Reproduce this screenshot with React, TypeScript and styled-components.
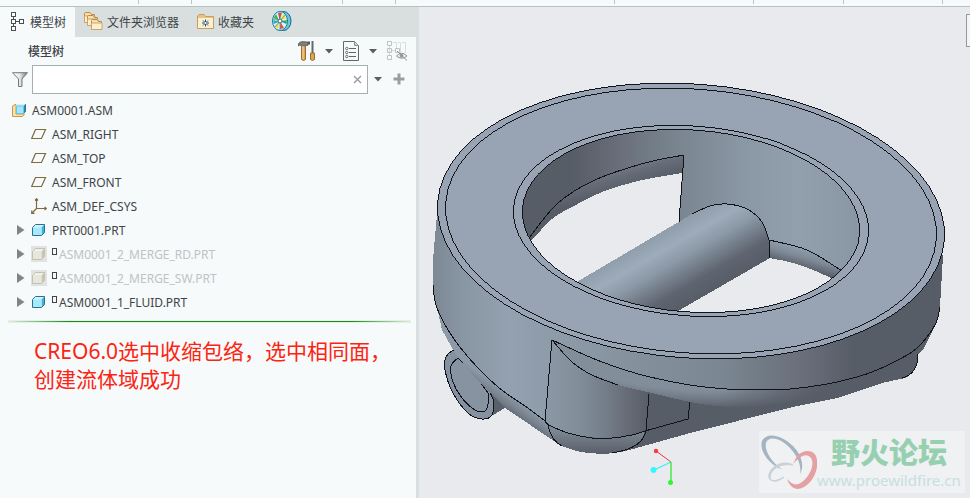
import React from "react";
import styled, { createGlobalStyle } from "styled-components";

const Global = createGlobalStyle`
  * { box-sizing: border-box; }
  body {
    margin: 0;
    background: #e9eaee;
    color: #404448;
    font-family: "Noto Sans", "Noto Sans CJK SC", sans-serif;
    font-size: 12px;
  }
  button { padding: 0; border: 0; background: none; color: inherit; font: inherit; display: flex; align-items: center; }
  svg { display: block; flex: none; }
`;

const Page = styled.div`
  min-height: 100vh;
  display: flex;
  flex-direction: column;
`;
const Ribbon = styled.header`
  height: 7px;
  display: flex;
  background: #f7fafb;
  border-bottom: 1px solid #b3c3c2;
`;
const RibbonGroup = styled.div<{ $w: number }>`
  width: ${(p) => p.$w}px;
  height: 4px;
  border-right: 1px solid #bfc3c6;
`;
const Main = styled.main`
  flex: 1;
  display: flex;
`;
const Side = styled.aside`
  width: 419px;
  flex: none;
  display: flex;
  flex-direction: column;
  background: #f7fafb;
  border-right: 3px solid #d9dfde;
`;
const Tabs = styled.nav`
  height: 30px;
  display: flex;
  background: #d9dfde;
`;
const Tab = styled.button<{ $active?: boolean }>`
  && {
    padding: 0 9px 2px 9px;
    gap: 4px;
    background: ${(p) => (p.$active ? "#f7fafb" : "transparent")};
    font-family: "Noto Sans CJK SC", sans-serif;
    white-space: nowrap;
  }
`;
const TitleRow = styled.div`
  height: 28px;
  display: flex;
  align-items: center;
  padding: 0 8px 0 28px;
`;
const Title = styled.h1`
  margin: 0;
  flex: 1;
  padding-bottom: 2px;
  font: 500 12px "Noto Sans CJK SC", sans-serif;
`;
const Tools = styled.div`
  display: flex;
  gap: 10px;
`;
const SearchRow = styled.div`
  height: 29px;
  display: flex;
  align-items: center;
  padding: 0 11px 0 12px;
  gap: 4px;
`;
const SearchBox = styled.div`
  flex: 1;
  height: 29px;
  display: flex;
  align-items: center;
  padding-right: 5px;
  background: #fff;
  border: 1px solid #a3afb2;
`;
const SearchInput = styled.input`
  flex: 1;
  min-width: 0;
  border: 0;
  outline: 0;
  background: transparent;
  font: inherit;
`;
const SearchTools = styled.div`
  display: flex;
  align-items: center;
  gap: 11px;
  padding: 0 0 1px 2px;
`;
const Tree = styled.ul`
  margin: 4px 0 6px;
  padding: 0;
  list-style: none;
`;
const Row = styled.li<{ $root?: boolean; $muted?: boolean }>`
  height: 24px;
  display: flex;
  align-items: center;
  padding-left: ${(p) => (p.$root ? 12 : 16)}px;
  gap: 5px;
  font-size: 12px;
  color: ${(p) => (p.$muted ? "#c0c3c5" : "#404448")};
`;
const Expander = styled.button`
  width: 10px;
  height: 16px;
`;
const ExpanderGap = styled.span`
  width: 10px;
`;
const IconCell = styled.span<{ $muted?: boolean }>`
  width: 16px;
  height: 16px;
  background: ${(p) => (p.$muted ? "#e1e2e2" : "transparent")};
`;
const Label = styled.span`
  display: flex;
  align-items: flex-start;
  gap: 2px;
`;
const Flag = styled.span`
  width: 5px;
  height: 7px;
  margin-top: 2px;
  border: 1px solid #404448;
`;
const Divider = styled.hr`
  width: 403px;
  height: 3px;
  margin: 0 0 0 8px;
  border: 0;
  background:
    linear-gradient(90deg, #e4ece4, #168a1a 15%, #168a1a 85%, #e4ece4) center / 100% 1px no-repeat,
    #e3f0e3;
`;
const Note = styled.p`
  margin: 14px 0 0 34px;
  color: #fb2412;
  font-family: "Noto Sans", "Noto Sans CJK SC", sans-serif;
  font-size: 21px;
  line-height: 28px;
  white-space: nowrap;
`;
const Viewport = styled.section`
  flex: 1;
  min-width: 0;
  position: relative;
  overflow: hidden;
  background: #e9eaee;
`;
const Scene = styled.svg`
  width: 100%;
  height: auto;
`;
const Handle = styled.div`
  position: absolute;
  top: 7px;
  right: -4px;
  width: 8px;
  height: 33px;
  background: #f4f5f7;
  border: 1px solid #94979c;
`;
const Watermark = styled.div`
  position: absolute;
  right: 5px;
  bottom: 5px;
  width: 206px;
  height: 62px;
  display: flex;
  background: #eff1f3;
`;
const MarkText = styled.div`
  display: flex;
  flex-direction: column;
  align-items: center;
  white-space: nowrap;
`;
const MarkName = styled.strong`
  font: 900 29px/40px "Noto Sans CJK SC", sans-serif;
  color: #96d0b0;
`;
const MarkUrl = styled.a`
  font: 15px/18px "Noto Sans", sans-serif;
  color: #c6dfe0;
  text-decoration: none;
`;

type Pt = [number, number];

// Smooth curve through the points (Catmull-Rom converted to cubic Béziers).
function seg(p: Pt[]): string {
  let d = "";
  for (let i = 0; i < p.length - 1; i++) {
    const a = p[i - 1] || p[i];
    const b = p[i];
    const c = p[i + 1];
    const e = p[i + 2] || c;
    d += `C${b[0] + (c[0] - a[0]) / 6} ${b[1] + (c[1] - a[1]) / 6} ${c[0] - (e[0] - b[0]) / 6} ${c[1] - (e[1] - b[1]) / 6} ${c[0]} ${c[1]}`;
  }
  return d;
}
const curve = (p: Pt[]) => `M${p[0][0]} ${p[0][1]}${seg(p)}`;
const rev = (p: Pt[]) => [...p].reverse();
const to = (p: Pt[]) => `L${p[0][0]} ${p[0][1]}${seg(p)}`;

const wallLeft: Pt[] = [[437, 214], [433, 262], [433, 285], [436, 305], [448, 330], [468, 357], [498, 387], [525, 406], [545, 421]];
const baseArc: Pt[] = [[545, 421], [549, 425], [568, 433], [592, 438], [612, 438], [632, 435], [645, 431], [688, 419]];
const lowerRim: Pt[] = [[552, 340], [592, 358], [625, 370], [650, 377], [690, 385], [727, 389], [760, 390], [790, 389], [827, 384], [857, 377], [877, 370], [898, 360], [917, 348], [935, 325], [940, 307]];
const filletEdge: Pt[] = [[552, 340], [572, 362], [592, 375], [618, 385], [652, 393], [695, 403], [733, 407], [797, 405]];
const nozzleOut: Pt[] = [[453, 350], [446, 357], [445, 370], [453, 393], [468, 413], [482, 419], [492, 415], [494, 401]];
const nozzleIn: Pt[] = [[458, 358], [451, 366], [453, 382], [462, 398], [475, 410], [485, 411], [488, 404], [488, 393]];
const holeRim: Pt[] = [[529, 238], [558, 203], [595, 180], [645, 163], [684, 155]];
const holeEdge: Pt[] = [[532, 240], [552, 219], [572, 207], [602, 192], [638, 181], [682, 173]];
const shaftEnd: Pt[] = [[692, 214], [710, 206], [727, 204], [747, 209], [762, 222], [769, 240]];
const rightRim: Pt[] = [[769, 240], [807, 250], [842, 271]];
const rightEdge: Pt[] = [[770, 258], [800, 265], [836, 280]];
const underFillet = `${curve(filletEdge)}${to(rev(lowerRim.slice(0, 10)))}Z`;

type Stop = [number, string];
const Grad = ({ id, p, stops }: { id: string; p: number[]; stops: Stop[] }) => (
  <linearGradient id={id} gradientUnits="userSpaceOnUse" x1={p[0]} y1={p[1]} x2={p[2]} y2={p[3]}>
    {stops.map(([o, c]) => <stop key={o} offset={o} stopColor={c} />)}
  </linearGradient>
);

const turn = "rotate(4.3 691 221)";

function Model() {
  return (
    <Scene viewBox="419 7 551 491" shapeRendering="crispEdges" role="img" aria-label="ASM0001">
      <defs>
        <Grad id="outer" p={[432, 0, 945, 0]} stops={[[0, "#7c8894"], [0.06, "#8996a3"], [0.15, "#93a1b0"], [0.25, "#8d9aa8"], [0.4, "#84919d"], [0.56, "#7b8792"], [0.65, "#707a85"], [0.72, "#6a6f7b"], [0.82, "#575d67"], [1, "#575d67"]]} />
        <Grad id="inner" p={[522, 0, 860, 0]} stops={[[0, "#575d67"], [0.15, "#575d67"], [0.29, "#6a6e7a"], [0.38, "#717c87"], [0.52, "#7e8a95"], [0.65, "#8a97a4"], [0.82, "#92a0ae"], [1, "#8996a4"]]} />
        <Grad id="shaft" p={[650, 239, 688, 305]} stops={[[0, "#909eac"], [0.22, "#9dabba"], [0.42, "#8c99a7"], [0.62, "#727c88"], [0.78, "#5f6570"], [1, "#575d67"]]} />
        <Grad id="fillet" p={[624, 160, 632, 188]} stops={[[0, "#7a8692"], [0.5, "#666c77"], [1, "#575d67"]]} />
        <Grad id="rightFillet" p={[806, 247, 800, 268]} stops={[[0, "#93a1b0"], [0.5, "#7e8a96"], [1, "#575d67"]]} />
        <Grad id="boss" p={[545, 0, 650, 0]} stops={[[0, "#8b98a5"], [0.3, "#828f9b"], [0.6, "#727c88"], [0.8, "#656a75"], [1, "#575d67"]]} />
        <Grad id="bossEnd" p={[0, 430, 0, 455]} stops={[[0, "#7c8894"], [0.5, "#6a727d"], [1, "#575d67"]]} />
        <Grad id="round" p={[490, 380, 480, 394]} stops={[[0, "#8c99a7"], [0.5, "#78838f"], [1, "#5c626d"]]} />
        <radialGradient id="under" gradientUnits="userSpaceOnUse" cx="0" cy="0" r="1.13" gradientTransform="translate(689 253) rotate(4.3) scale(254 137)">
          <stop offset=".88" stopColor="#828f9b" />
          <stop offset=".94" stopColor="#6f7985" />
          <stop offset="1" stopColor="#575d67" />
        </radialGradient>
        <linearGradient id="shade" gradientUnits="userSpaceOnUse" x1="720" y1="0" x2="825" y2="0">
          <stop offset="0" stopColor="#575d67" stopOpacity="0" />
          <stop offset="1" stopColor="#575d67" />
        </linearGradient>
        <clipPath id="hole"><ellipse cx="691" cy="221" rx="169" ry="91" transform={turn} /></clipPath>
      </defs>

      <path d="M453 350L480 372L505 408L493 415L482 419Z" fill="#59606b" />
      <path d={`${curve(nozzleOut)}L488 388L458 355Z`} fill="#8591a0" stroke="#111318" />
      <path d={`${curve(nozzleIn)}L475 375Z`} fill="#8793a1" stroke="#111318" />

      <path d="M545 415L557 443Q570 451 600 454Q615 454 633 449L690 433L797 406L837 398L882 383L905 378Q917 373 918 354L924 348L936 324L760 340Z" fill="#575d67" />
      <path d="M433 290L442 330L455 353L475 378L505 408L557 443L560 425L470 330Z" fill="url(#round)" />
      <path d={`${curve(wallLeft)}L552 340${seg(lowerRim)}L943 255L700 120Z`} fill="url(#outer)" />
      <path d={underFillet} fill="url(#under)" />
      <path d={underFillet} fill="url(#shade)" />
      <path d={`${curve(filletEdge.slice(0, 5))}L649 394L646 430L612 440L568 434L545 421Z`} fill="url(#boss)" />
      <path d={`M548 425${seg(baseArc.slice(1, 7))}Q640 450 612 453Q585 456 562 446Q550 438 548 425Z`} fill="url(#bossEnd)" />

      <g fill="none" stroke="#111318">
        <path d={curve(wallLeft.slice(2))} />
        <path d={curve(baseArc)} />
        <path d={curve(lowerRim)} />
        <path d={curve(filletEdge.slice(0, 4))} />
        <path d="M552 340L545 421M649 394L646 430Q644 448 612 453M548 425Q551 441 562 446M690 402L688 419M918 354Q918 374 902 378" />
      </g>

      <ellipse cx="691" cy="221" rx="254" ry="137" transform={turn} fill="#98a4b4" stroke="#111318" />
      <ellipse cx="691" cy="221" rx="246" ry="132" transform={turn} fill="#98a4b4" stroke="#111318" />
      <ellipse cx="691" cy="221" rx="178" ry="95" transform={turn} fill="#98a4b4" stroke="#111318" />

      <g clipPath="url(#hole)">
        <rect x="515" y="120" width="350" height="200" fill="url(#inner)" />
        <path d={`${curve(holeRim)}L682 173${seg(rev(holeEdge))}Z`} fill="url(#fillet)" />
        <path d={`${curve(holeEdge)}L679 222L577 282L570 330L500 250Z`} fill="#e9eaee" />
        <path d={`${curve(rightRim)}L836 280${seg(rev(rightEdge))}Z`} fill="url(#rightFillet)" />
        <path d={`${curve(rightEdge)}L860 330L640 330Z`} fill="#e9eaee" />
        <path d={`M570 286L692 214${seg(shaftEnd)}L770 258L678 311L640 330L560 300Z`} fill="url(#shaft)" />
        <g fill="none" stroke="#111318">
          <path d={curve(holeRim)} />
          <path d="M684 155L679 222M769 240L770 258" />
          <path d={curve(shaftEnd)} />
          <path d={curve(rightRim)} />
        </g>
      </g>
      <ellipse cx="691" cy="221" rx="169" ry="91" transform={turn} fill="none" stroke="#111318" />

      <g shapeRendering="auto">
        <path d="M671 462L656 451" stroke="#f03838" />
        <path d="M671 462L654 470" stroke="#30f0f8" strokeWidth="1.3" />
        <path d="M671 462V482" stroke="#30e830" strokeWidth="1.3" />
        <circle cx="656" cy="451" r="2.2" fill="#f83c3c" />
        <circle cx="653.5" cy="470" r="2.9" fill="#30f8ff" />
        <circle cx="670.5" cy="482.5" r="2.5" fill="#30f830" />
      </g>
    </Scene>
  );
}

const Caret = () => (
  <svg width="8" height="5" viewBox="0 0 8 5"><path d="M0 0H8L4 4.5Z" fill="#5b5e60" /></svg>
);
const TreeIcon = () => (
  <svg width="17" height="20" viewBox="1 0 17 20" shapeRendering="crispEdges" fill="#fff" stroke="#4c4f52">
    <path d="M5.5 5V15M5 10.5H12" />
    <path d="M3.5 1.5h4v4h-4zM3.5 8.5h4v4h-4zM3.5 15.5h4v4h-4zM11.5 8.5h4v4h-4z" />
  </svg>
);
const folderPath = "M.5 2.5Q.5 1.5 1.5 1.5H6L7.5 3.5H10.5V11.5H.5Z";
const FoldersIcon = () => (
  <svg width="19" height="20" viewBox="0 0 19 20" fill="#f7dfb0" stroke="#bd8a45">
    {[[0, 0], [3, 3], [7, 7]].map(([x, y]) => (
      <g key={x} transform={`translate(${x} ${y})`}>
        <path d={folderPath} />
        <path d="M.5 5h10.5v6.5H.5z" fill="#fdf0cf" stroke="#cfa368" />
      </g>
    ))}
  </svg>
);
const FavoriteIcon = () => (
  <svg width="17" height="15" viewBox="0 0 17 15">
    <path d="M.5 14V2L2 .5H7L8.5 2.5H16.5V14.5H.5Z" fill="#e6c38b" stroke="#c79d61" />
    <path d="M1 4H16V14H1Z" fill="#fdf0cf" />
    <path d="M8.5 5.5V12.5M5 9H12M6 6.5L11 11.5M11 6.5L6 11.5" stroke="#174f78" />
    <circle cx="8.5" cy="9" r="1" fill="#fff" />
  </svg>
);
const FanIcon = () => (
  <svg width="20" height="20" viewBox="0 0 20 20">
    <ellipse cx="11.5" cy="10" rx="7.5" ry="9.5" fill="#6fc4df" stroke="#116887" />
    <ellipse cx="8" cy="10" rx="7.5" ry="9.5" fill="#d8f4fa" stroke="#187b9c" />
    <path d="M7.5 9L6 2L10 2Z" fill="#ed4c38" />
    <path d="M8.5 9L11 3L14 7Z" fill="#ffe11e" />
    <path d="M9 10L15 9L14 13Z" fill="#46b34a" />
    <path d="M8.5 11L12 17L8 18Z" fill="#ed4c38" />
    <path d="M7 11L6 18L3 15Z" fill="#ffd91e" />
    <path d="M7 11L1.5 13L1.5 9Z" fill="#36a4c8" />
    <path d="M7 9.5L1.5 7L4 3Z" fill="#46b34a" />
    <path d="M8 1V19M1 8L15 12M3 16L13 4" stroke="#187b9c" strokeWidth=".6" />
    <circle cx="8" cy="10" r="2" fill="#fff" stroke="#246d88" />
  </svg>
);
const HammerIcon = () => (
  <svg width="17" height="20" viewBox="0 0 17 20">
    <path d="M0 5V3Q2 0 5 .5L10 1V4.5H3Q1 4 0 5Z" fill="#777d81" stroke="#44494c" strokeWidth=".6" />
    <path d="M10 2H12" stroke="#555" strokeWidth="3" />
    <path d="M3.5 5H7.5V18.5Q5.5 20.5 3.5 18.5Z" fill="#d9a55c" stroke="#a06c2b" />
    <path d="M5 5V18" stroke="#f6d9a4" />
    <path d="M14.5 0V12" stroke="#63686c" strokeWidth="2" />
    <path d="M12.5 12H16.5V18.5Q14.5 20.5 12.5 18.5Z" fill="#d9a55c" stroke="#a06c2b" />
  </svg>
);
const ListIcon = () => (
  <svg width="16" height="20" viewBox="0 0 16 20">
    <path d="M.5.5H11.5L15.5 4.5V19.5H.5Z" fill="#f5f8f9" stroke="#62686b" />
    <path d="M11.5.5V4.5H15.5" fill="#ccd2d4" stroke="#8a9092" />
    <path d="M6 7.5H13M6 11.5H13M6 15.5H13" stroke="#5f6568" />
    <g fill="#fff" stroke="#4d5356" strokeWidth=".8">
      <circle cx="3.8" cy="7.5" r="1.2" /><circle cx="3.8" cy="11.5" r="1.2" /><circle cx="3.8" cy="15.5" r="1.2" />
    </g>
  </svg>
);
const HiddenTreeIcon = () => (
  <svg width="21" height="20" viewBox="0 0 21 20" fill="none">
    <path d="M6 1.5H9.5V7M11 1.5H13.5V13M15 1.5H18.5V12M2.5 5V15M5 9.5H8" stroke="#dadddd" />
    <path d="M.5.5h4v4h-4zM.5 7.5h4v4h-4zM.5 14.5h4v4h-4zM8.5 7.5h4v4h-4z" stroke="#bfc2c2" />
    <path d="M9.5 15Q14.5 9.5 20 15Q14.5 19.5 9.5 15ZM10 10L20 19.5" stroke="#8d9292" />
    <circle cx="14.5" cy="14.8" r="2" fill="#969a9a" />
  </svg>
);
const FilterIcon = () => (
  <svg width="16" height="15" viewBox="0 0 16 15">
    <defs><linearGradient id="funnel"><stop stopColor="#fff" /><stop offset=".5" stopColor="#e4e6e7" /><stop offset="1" stopColor="#6d7173" /></linearGradient></defs>
    <path d="M.5.7H15.5L10 7V14.5H6.5V7Z" fill="url(#funnel)" stroke="#77797b" />
  </svg>
);
const CloseIcon = () => (
  <svg width="9" height="9" viewBox="0 0 9 9"><path d="M1 1L8 8M8 1L1 8" stroke="#96999b" strokeWidth="1.3" /></svg>
);
const PlusIcon = () => (
  <svg width="12" height="12" viewBox="0 0 12 12"><path d="M6 .5V11.5M.5 6H11.5" stroke="#9b9e9f" strokeWidth="3" /></svg>
);
const AsmIcon = () => (
  <svg width="15" height="15" viewBox="0 0 15 15">
    <path d="M.5 3L3 1.5H4V11H12.500L10.500 13.5H.5Z" fill="#fbe2ab" stroke="#c29b55" />
    <path d="M11.500 3L13.5 1V8.500L11.500 10.500Z" fill="#2f86ac" stroke="#2f7896" />
    <path d="M4 3L6 1H13.5L11.500 3Z" fill="#c9f2fd" />
    <path d="M4.500 3H11.5V10.5H4.500Z" fill="#a4e6fc" stroke="#6cc4e2" />
  </svg>
);
const PlaneIcon = () => (
  <svg width="16" height="16" viewBox="0 0 16 16"><path d="M4.5 3.5H14.5L10.5 12.5H.7Z" fill="none" stroke="#806a3e" strokeWidth="1.2" /></svg>
);
const CsysIcon = () => (
  <svg width="16" height="16" viewBox="0 0 16 16" stroke="#806a3e" strokeWidth="1.2" fill="none">
    <path d="M5.5 1V10.5H15M5.5 10.5L1 15M4 2.5L5.5 .7L7 2.5M13.5 9L15.3 10.5L13.5 12M.7 12.5V15.3H3.5" />
  </svg>
);
const PartIcon = ({ muted }: { muted?: boolean }) => (
  <svg width="16" height="16" viewBox="0 0 16 16" strokeLinejoin="round">
    <path d="M1.5 5.5L4.5 2.5H13.5L10.5 5.5Z" fill={muted ? "#f0efea" : "#c9f2fd"} />
    <path d="M10.5 5.5L13.5 2.5V10.5L10.5 13.5Z" fill={muted ? "#c9c6b1" : "#3db2de"} />
    <path d="M1.5 5.5H10.5V13.5H1.5Z" fill={muted ? "#e8e7df" : "#a6e9fd"} />
    <path d="M1.5 5.5L4.5 2.5H13.5V10.5L10.5 13.5H1.5Z" fill="none" stroke={muted ? "#c3c0ac" : "#2b7192"} />
  </svg>
);
const ExpandIcon = () => (
  <svg width="9" height="10" viewBox="0 0 9 10"><path d="M1 0L8.5 5L1 10Z" fill="#828587" /></svg>
);

type Kind = "plane" | "csys" | "part";
const items: { name: string; kind: Kind; flag?: boolean; muted?: boolean }[] = [
  { name: "ASM_RIGHT", kind: "plane" },
  { name: "ASM_TOP", kind: "plane" },
  { name: "ASM_FRONT", kind: "plane" },
  { name: "ASM_DEF_CSYS", kind: "csys" },
  { name: "PRT0001.PRT", kind: "part" },
  { name: "ASM0001_2_MERGE_RD.PRT", kind: "part", flag: true, muted: true },
  { name: "ASM0001_2_MERGE_SW.PRT", kind: "part", flag: true, muted: true },
  { name: "ASM0001_1_FLUID.PRT", kind: "part", flag: true },
];

export default function App() {
  return (
    <Page>
      <Global />
      <Ribbon>
        {[139, 53, 151, 53, 219, 139, 90, 99].map((w, i) => <RibbonGroup key={i} $w={w} />)}
      </Ribbon>
      <Main>
        <Side>
          <Tabs>
            <Tab $active><TreeIcon />模型树</Tab>
            <Tab><FoldersIcon />文件夹浏览器</Tab>
            <Tab><FavoriteIcon />收藏夹</Tab>
            <Tab aria-label="流体分析"><FanIcon /></Tab>
          </Tabs>
          <TitleRow>
            <Title>模型树</Title>
            <Tools>
              <button aria-label="设置"><HammerIcon /></button>
              <button aria-label="设置选项"><Caret /></button>
              <button aria-label="显示"><ListIcon /></button>
              <button aria-label="显示选项"><Caret /></button>
              <button aria-label="隐藏树"><HiddenTreeIcon /></button>
            </Tools>
          </TitleRow>
          <SearchRow>
            <FilterIcon />
            <SearchBox>
              <SearchInput aria-label="搜索模型树" />
              <button aria-label="清除"><CloseIcon /></button>
            </SearchBox>
            <SearchTools>
              <button aria-label="搜索选项"><Caret /></button>
              <button aria-label="添加"><PlusIcon /></button>
            </SearchTools>
          </SearchRow>
          <Tree>
            <Row $root><AsmIcon /><Label>ASM0001.ASM</Label></Row>
            {items.map((it) => (
              <Row key={it.name} $muted={it.muted}>
                {it.kind === "part" ? <Expander aria-label={`展开 ${it.name}`}><ExpandIcon /></Expander> : <ExpanderGap />}
                <IconCell $muted={it.muted}>
                  {it.kind === "plane" && <PlaneIcon />}
                  {it.kind === "csys" && <CsysIcon />}
                  {it.kind === "part" && <PartIcon muted={it.muted} />}
                </IconCell>
                <Label>{it.flag && <Flag />}{it.name}</Label>
              </Row>
            ))}
          </Tree>
          <Divider />
          <Note>CREO6.0选中收缩包络，选中相同面，<br />创建流体域成功</Note>
        </Side>
        <Viewport>
          <Model />
          <Handle />
          <Watermark>
            <svg width="58" height="62" viewBox="0 0 58 62" fillRule="evenodd">
              <path d="M3 10C7 1 22 3 34 15C42 23 46 35 41 43C43 33 37 23 30 16C20 6 9 5 7 12C5 20 14 33 24 39C10 34 0 20 3 10Z" fill="#a5b4c1" />
              <path d="M38 25C46 17 57 19 58 29C60 42 50 57 39 58C34 58 30 54 28 48C33 54 38 55 43 51C51 45 56 33 52 27C48 22 42 24 34 33Z" fill="#e5a0a4" />
              <path d="M34 34C23 28 8 37 10 47C12 52 20 49 25 46C19 51 12 52 11 46C12 37 23 32 34 34Z" fill="#c8d0d8" stroke="#c8d0d8" />
            </svg>
            <MarkText>
              <MarkName>野火论坛</MarkName>
              <MarkUrl href="#">www.proewildfire.cn</MarkUrl>
            </MarkText>
          </Watermark>
        </Viewport>
      </Main>
    </Page>
  );
}
